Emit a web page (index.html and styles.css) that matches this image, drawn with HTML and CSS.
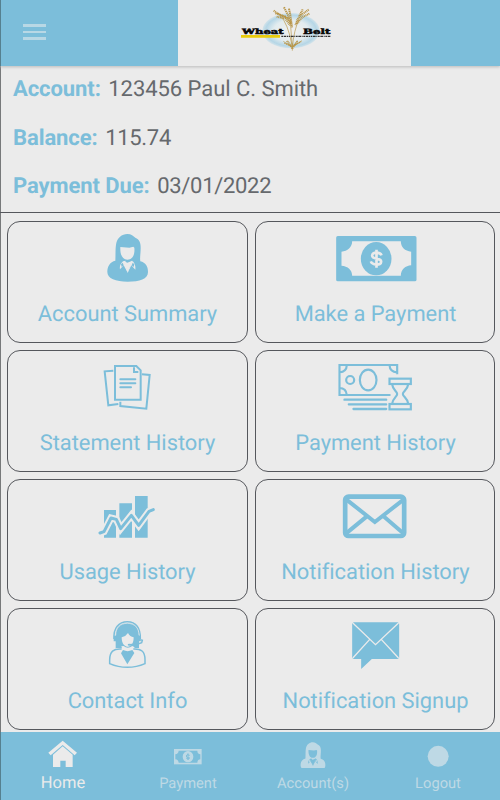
FILE: index.html
```html
<!DOCTYPE html>
<html lang="en">
<head>
<meta charset="utf-8">
<title>Wheat Belt</title>
<link rel="stylesheet" href="styles.css">
</head>
<body>
<div class="app">
<header class="topbar">
  <button class="menu" aria-label="Menu"><span></span><span></span><span></span></button>
  <div class="logo">
    <svg width="120" height="66" viewBox="0 0 360 198">
      <defs><radialGradient id="halo"><stop offset="0" stop-color="#f0f1f0"/><stop offset=".6" stop-color="#e3ecef"/><stop offset=".88" stop-color="#b5d6e6"/><stop offset="1" stop-color="#d3e3ea"/></radialGradient></defs>
      <ellipse cx="183" cy="92" rx="86" ry="53" fill="url(#halo)"/>
      <g fill="none" stroke="#b89547" stroke-width="2">
        <path d="M187 142L181 66M187 142Q192 90 207 58M186 136Q174 70 150 46M187 142L160 124M187 142L216 122M187 142L174 122M187 142L202 122M187 130V152" stroke-width="2"/>
        <path d="M131 32L152 46L178 56M136 40L165 49L182 72M140 50L166 56L180 76" stroke-width="6" stroke-dasharray="3 2"/>
        <path d="M162 22L173 43L183 72M177 26L181 45L186 82" stroke-width="6" stroke-dasharray="4 2"/>
        <path d="M236 29L216 43L199 63M238 41L217 52L200 72M218 28L208 48L196 75" stroke-width="6" stroke-dasharray="3 2"/>
        <path d="M163 129L186 139L213 125M170 123L187 147L203 122" stroke-width="4" stroke-dasharray="4 2"/>
      </g>
      <path d="M33 109H150" stroke="#ebcd0b" stroke-width="8"/>
      <g class="brand"><text x="36" y="102" textLength="125" lengthAdjust="spacingAndGlyphs">Wheat</text><text x="219" y="102" textLength="82" lengthAdjust="spacingAndGlyphs">Belt</text></g>
      <path d="M154 109H301" stroke="#333" stroke-width="4" stroke-dasharray="5 2 8 2 3 2"/>
    </svg>
  </div>
</header>
<section class="summary">
  <p><b>Account:</b><span>123456 Paul C. Smith</span></p>
  <p><b>Balance:</b><span class="figure">115.74</span></p>
  <p><b>Payment Due:</b><span class="figure">03/01/2022</span></p>
</section>
<main class="grid">
  <a class="card">
    <svg width="75" height="65" viewBox="0 0 225 195"><g id="woman"><path class="f" d="M76 107C77 84 76 72 78 59C81 38 96 27 112 27C124 27 130 33 136 38C148 43 152 52 152 68C152 87 149 99 151 109C167 113 174 124 174 141C174 163 149 170 113 170S52 161 52 141C52 123 60 111 76 107Z"/><path class="p" d="M91 66L118 68L130 65L133 68C135 85 130 104 112 104C96 104 90 87 91 66ZM99 109L106 107L113 142L125 107L130 110C135 117 137 124 136 134L124 121L113 143L101 121L90 133C88 123 92 116 99 109Z"/><path class="p" d="M101 108L112 113L127 107L113 143Z"/><path class="f" d="M93 118L98 113L101 121L95 126ZM133 118L128 113L125 121L131 126Z"/></g></svg>
    <span>Account Summary</span>
  </a>
  <a class="card">
    <svg width="100" height="65" viewBox="1.5 0 300 195"><rect class="f" x="32" y="33" width="241" height="136" rx="5"/><path class="p" d="M80 49H226C226 66 238 79 257 80V121C240 122 226 134 226 152H80C80 135 67 123 48 122V80C66 79 80 67 80 49Z"/><ellipse class="f" cx="152" cy="101" rx="46" ry="50"/><path class="w" stroke-width="8" d="M168 91C165 81 139 79 140 93C141 105 167 97 167 110C167 123 140 120 136 109M153 74V128"/></svg>
    <span>Make a Payment</span>
  </a>
  <a class="card">
    <svg width="75" height="65" viewBox="0 -3 225 195"><g class="s" stroke-width="6"><path d="M75 33H139L152 46V134H75ZM132 37V51H145M70 47L44 49L55 151L85 147M156 58L179 60L169 161L91 153V140"/><path d="M91 73H136M91 85H136M91 97H123" stroke-linecap="round"/></g></svg>
    <span>Statement History</span>
  </a>
  <a class="card">
    <svg width="100" height="65" viewBox="1.5 -3 300 195"><g class="s" stroke-width="6.5"><path d="M215 58V30H42V120H195M42 52Q63 51 64 30M192 30Q193 51 215 52M42 99Q62 99 64 120"/><circle cx="74" cy="75" r="12"/><ellipse cx="128" cy="75" rx="25" ry="31"/><path d="M57 134H182M70 148H182M84 162H182" stroke-linecap="round" stroke-width="7"/><rect x="192" y="71" width="64" height="16"/><rect x="192" y="147" width="64" height="16"/><path d="M200 88C202 106 215 109 215 117S202 129 200 146M248 88C246 106 232 109 232 117S246 129 248 146"/></g></svg>
    <span>Payment History</span>
  </a>
  <a class="card">
    <svg width="75" height="65" viewBox="0 -6 225 195"><path class="f" d="M42 75H78V158H42ZM88 55H126V158H88ZM135 33H173V158H135Z"/><path class="back" d="M30 144L42 140L63 99L79 103L92 131L124 91L146 121L177 79L190 74"/><path class="s" stroke-width="9" stroke-linecap="round" stroke-linejoin="round" d="M30 144L42 140L63 99L79 103L92 131L124 91L146 121L177 79L190 74"/></svg>
    <span>Usage History</span>
  </a>
  <a class="card">
    <svg width="100" height="65" viewBox="1.5 -6 300 195"><rect class="s" x="59" y="35" width="177" height="118" rx="10" stroke-width="14"/><path class="s" stroke-width="12" d="M62 43L148 111L235 43M61 146L124 94M235 146L174 94"/></svg>
    <span>Notification History</span>
  </a>
  <a class="card">
    <svg width="75" height="65" viewBox="0 6 225 195"><path class="f" d="M77 114V75C77 51 91 39 112 39S147 51 147 75V114Z"/><path class="p" d="M95 82Q108 79 114 69Q120 80 131 82C131 98 125 110 113 110C101 110 95 98 95 82Z"/><path class="p" d="M94 109L101 108Q113 119 127 108L134 112L127 121H98Z"/><path class="s" stroke-width="4.5" d="M72 87C70 54 86 35 112 35S152 54 151 87M151 89L157 91L155 98L146 101L120 104M95 117C70 115 59 125 59 150V161Q84 172 112 172T165 161V149C165 123 153 116 130 117"/><path class="w" stroke-width="2" d="M77 76C77 53 91 40 112 40S147 53 147 76"/><path class="f" d="M99 120Q113 127 127 120L133 129L112 163L93 130ZM71 77H79V94H71ZM146 77H152V94H146Z"/><ellipse class="f" cx="118" cy="104" rx="5" ry="3"/></svg>
    <span>Contact Info</span>
  </a>
  <a class="card">
    <svg width="100" height="65" viewBox="1.5 6 300 195"><path class="f" d="M84 37H217L221 41V143L217 147H139L107 177V147H84L80 143V41Z"/><path class="w" stroke-width="4" d="M82 39L150 104L219 39M82 144L132 89M219 144L168 89"/></svg>
    <span>Notification Signup</span>
  </a>
</main>
<nav class="tabs">
  <a class="tab active"><svg width="30" height="36" viewBox="145 96 90 108"><path fill="#ebebeb" d="M146 158L189 122L232 158L225 166L189 135L153 166Z"/><path fill="#ebebeb" d="M160 164L189 139L219 164V201H198V182H182V201H160Z"/></svg><span>Home</span></a>
  <a class="tab"><svg width="30" height="36" viewBox="520 96 90 108"><path fill="#bed9e5" d="M523 147H606V193H523Z"/><path fill="#7cbeda" d="M537 152H593Q593 162 602 163V178Q594 178 593 188H537Q536 179 527 178V163Q536 162 537 152Z"/><ellipse cx="565" cy="170" rx="16" ry="17" fill="#bed9e5"/><path d="M570 166Q560 161 560 168T570 174Q566 180 560 175M565 160V180" fill="none" stroke="#7cbeda" stroke-width="3"/></svg><span>Payment</span></a>
  <a class="tab account"><svg width="30" height="36" viewBox="895 96 90 108"><g transform="translate(871 110) scale(.61)"><use href="#woman"/></g></svg><span>Account(s)</span></a>
  <a class="tab"><svg width="30" height="36" viewBox="1270 96 90 108"><circle cx="1315.5" cy="169" r="31.5" fill="#bed9e5"/></svg><span>Logout</span></a>
</nav>
</div>
</body>
</html>
```
FILE: styles.css
```css
* { box-sizing: border-box; }
body { margin: 0; font-family: Roboto, sans-serif; text-rendering: geometricPrecision; background: #ebebeb; --ink: #7cbeda; --paper: #ebebeb; }
.app { width: 500px; height: 800px; display: flex; flex-direction: column; overflow: hidden; box-shadow: inset 1px 0 #77797a; }
.topbar { height: 66px; flex: none; display: grid; grid-template-columns: 177px 233px 1fr; background: #7cbeda; border-left: 1px solid #55808f; box-shadow: 0 1px 3px #bbb; }
.menu { width: 23px; margin: 24px 0 0 22px; padding: 0; border: 0; background: none; display: flex; flex-direction: column; gap: 4.2px; height: 17px; }
.menu span { height: 2.5px; flex: none; background: #b8d8e5; }
.logo { background: #ebebeb; padding-left: 52px; }
.logo svg { display: block; }
.brand { font: 900 22px "DejaVu Serif", serif; fill: #080808; stroke: #080808; stroke-width: 1.5; }
.summary { height: 147px; flex: none; border-bottom: 1px solid #55575c; padding: 1px 13px 0; font-size: 22px; color: #66696d; }
.summary p { margin: 0; height: 48.7px; line-height: 45px; white-space: nowrap; }
.summary b { color: #7cbeda; margin-right: 7.5px; font-weight: 700; letter-spacing: -.08px; }
.summary span { letter-spacing: -.05px; }
.summary .figure { letter-spacing: -.3px; }
.grid { height: 519px; flex: none; display: grid; grid-template-columns: 241px 240px; grid-auto-rows: 122px; gap: 7px; padding: 8px 4px 0 7px; }
.card { border: 1px solid #55575c; border-radius: 13px; display: flex; flex-direction: column; align-items: center; padding-top: 3px; color: #7cbeda; font-size: 21.9px; letter-spacing: -.03px; }
.card:nth-child(even) { padding-left: 1px; }
.card svg { flex: none; }
.card span { line-height: 26px; margin-top: 12px; white-space: nowrap; }
.f { fill: var(--ink); }
.p { fill: var(--paper); }
.s { fill: none; stroke: var(--ink); }
.w { fill: none; stroke: var(--paper); }
.back { fill: none; stroke: var(--paper); stroke-width: 21; }
.tabs { height: 68px; flex: none; display: grid; grid-template-columns: repeat(4, 125px); background: #7cbeda; border-left: 1px solid #55808f; color: #bed9e5; }
.tab { display: flex; flex-direction: column; align-items: center; font-size: 14.7px; padding-right: 1px; }
.tab svg { margin-top: 0; flex: none; }
.tab span { line-height: 20px; margin-top: 5px; }
.active { color: #ebebeb; font-size: 16.5px; }
.active span { margin-top: 6px; }
.account { --ink: #bed9e5; --paper: #7cbeda; }
```
